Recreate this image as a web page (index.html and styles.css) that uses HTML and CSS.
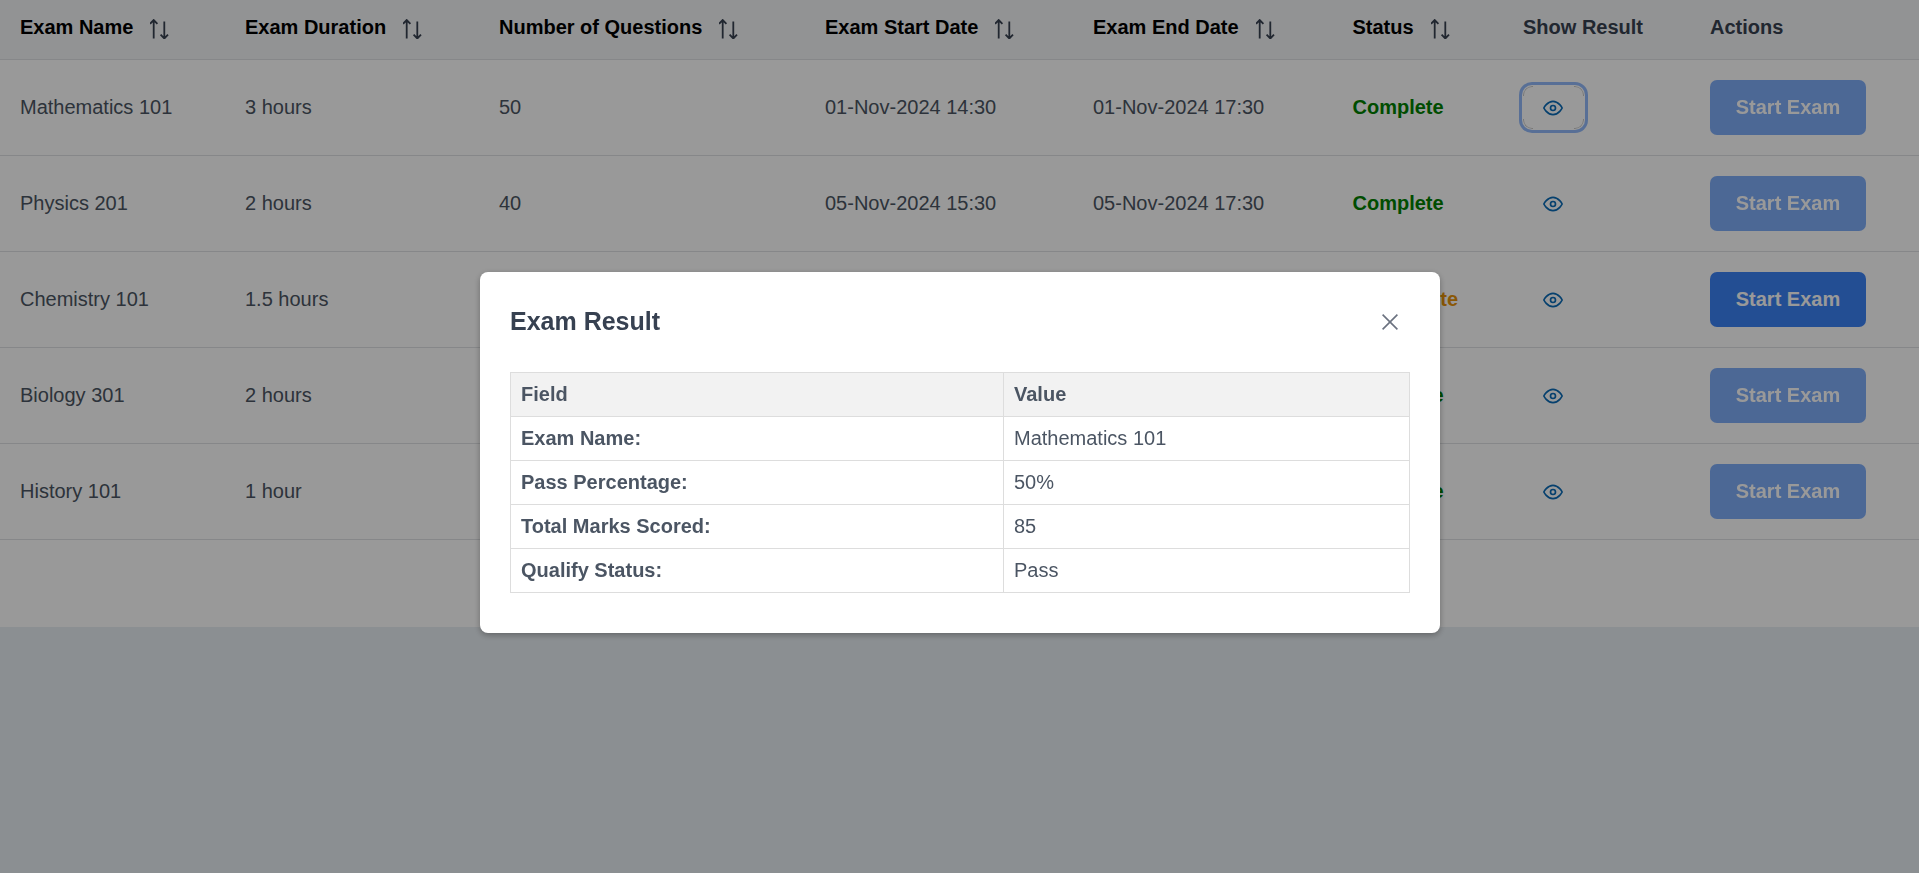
FILE: index.html
```html
<!DOCTYPE html>
<html lang="en">
<head>
<meta charset="utf-8">
<title>Exams</title>
<link rel="stylesheet" href="styles.css">
</head>
<body>
<svg class="defs" aria-hidden="true">
  <symbol id="sort" viewBox="0 0 20 20"><path d="M3.7 19.5V1M0 4.8 3.7 1l3.7 3.8M14.3 2.5v17M10.6 15.7l3.7 3.8 3.7-3.8"/></symbol>
  <symbol id="eye" viewBox="0 0 24 24"><path d="M1 12s4-8 11-8 11 8 11 8-4 8-11 8-11-8-11-8z"/><circle cx="12" cy="12" r="3"/></symbol>
</svg>
<main class="card">
  <table class="exams">
    <colgroup>
      <col class="c1"><col class="c2"><col class="c3"><col class="c4"><col class="c5"><col class="c6"><col class="c7"><col>
    </colgroup>
    <thead>
      <tr>
        <th class="sortable"><div class="th-in"><span>Exam Name</span><svg class="sort"><use href="#sort"/></svg></div></th>
        <th class="sortable"><div class="th-in"><span>Exam Duration</span><svg class="sort"><use href="#sort"/></svg></div></th>
        <th class="sortable"><div class="th-in"><span>Number of Questions</span><svg class="sort"><use href="#sort"/></svg></div></th>
        <th class="sortable"><div class="th-in"><span>Exam Start Date</span><svg class="sort"><use href="#sort"/></svg></div></th>
        <th class="sortable"><div class="th-in"><span>Exam End Date</span><svg class="sort"><use href="#sort"/></svg></div></th>
        <th class="sortable"><div class="th-in"><span>Status</span><svg class="sort"><use href="#sort"/></svg></div></th>
        <th>Show Result</th>
        <th>Actions</th>
      </tr>
    </thead>
    <tbody>
      <tr>
        <td>Mathematics 101</td><td>3 hours</td><td>50</td><td>01-Nov-2024 14:30</td><td>01-Nov-2024 17:30</td>
        <td class="done">Complete</td>
        <td class="ctl"><button class="view focused" type="button" aria-label="Show result"><svg class="eye"><use href="#eye"/></svg></button></td>
        <td class="ctl"><button class="start" type="button" disabled>Start Exam</button></td>
      </tr>
      <tr>
        <td>Physics 201</td><td>2 hours</td><td>40</td><td>05-Nov-2024 15:30</td><td>05-Nov-2024 17:30</td>
        <td class="done">Complete</td>
        <td class="ctl"><button class="view" type="button" aria-label="Show result"><svg class="eye"><use href="#eye"/></svg></button></td>
        <td class="ctl"><button class="start" type="button" disabled>Start Exam</button></td>
      </tr>
      <tr>
        <td>Chemistry 101</td><td>1.5 hours</td><td>30</td><td>10-Nov-2024 10:00</td><td>10-Nov-2024 11:30</td>
        <td class="open">Incomplete</td>
        <td class="ctl"><button class="view" type="button" aria-label="Show result"><svg class="eye"><use href="#eye"/></svg></button></td>
        <td class="ctl"><button class="start" type="button">Start Exam</button></td>
      </tr>
      <tr>
        <td>Biology 301</td><td>2 hours</td><td>45</td><td>15-Nov-2024 09:00</td><td>15-Nov-2024 11:00</td>
        <td class="done">Complete</td>
        <td class="ctl"><button class="view" type="button" aria-label="Show result"><svg class="eye"><use href="#eye"/></svg></button></td>
        <td class="ctl"><button class="start" type="button" disabled>Start Exam</button></td>
      </tr>
      <tr>
        <td>History 101</td><td>1 hour</td><td>25</td><td>20-Nov-2024 13:00</td><td>20-Nov-2024 14:00</td>
        <td class="done">Complete</td>
        <td class="ctl"><button class="view" type="button" aria-label="Show result"><svg class="eye"><use href="#eye"/></svg></button></td>
        <td class="ctl"><button class="start" type="button" disabled>Start Exam</button></td>
      </tr>
    </tbody>
  </table>
</main>
<div class="overlay">
  <section class="modal">
    <header class="modal-head">
      <h2>Exam Result</h2>
      <button class="close" type="button" aria-label="Close">
        <svg class="x" viewBox="0 0 16 16"><path d="M.6.6l14.8 14.8M15.4.6.6 15.4"/></svg>
      </button>
    </header>
    <table class="result">
      <colgroup><col class="field"><col></colgroup>
      <thead>
        <tr><th>Field</th><th>Value</th></tr>
      </thead>
      <tbody>
        <tr><th>Exam Name:</th><td>Mathematics 101</td></tr>
        <tr><th>Pass Percentage:</th><td>50%</td></tr>
        <tr><th>Total Marks Scored:</th><td>85</td></tr>
        <tr><th>Qualify Status:</th><td>Pass</td></tr>
      </tbody>
    </table>
  </section>
</div>
</body>
</html>
```

FILE: styles.css
```css
* { box-sizing: border-box; }
html, body { height: 100%; }
body {
  margin: 0;
  background: #e8eef3;
  font-family: "Liberation Sans", Arial, sans-serif;
  font-size: 20px;
  line-height: 30px;
  color: #4b5563;
  overflow: hidden;
}
.defs { display: none; }
.card { background: #fff; padding-bottom: 87px; }

.exams { width: 100%; table-layout: fixed; border-collapse: separate; border-spacing: 0; }
.c1 { width: 225px; }
.c2 { width: 254px; }
.c3 { width: 326px; }
.c4 { width: 268px; }
.c5 { width: 259.5px; }
.c6 { width: 170.5px; }
.c7 { width: 187px; }

.exams th {
  background: #f4f5f7;
  padding: 12px 20px 17px;
  text-align: left;
  font-weight: 700;
  color: #374151;
  border-bottom: 1px solid #e0e2e5;
  white-space: nowrap;
}
.exams th.sortable { color: #000; }
.th-in { display: flex; align-items: center; gap: 17px; }
.sort {
  width: 20px;
  height: 20px;
  margin-top: 3px;
  fill: none;
  stroke: #374151;
  stroke-width: 1.8;
  flex: none;
}
.exams td { padding: 19px 20px 21px; border-bottom: 1px solid #e0e2e5; white-space: nowrap; }
.exams td.ctl { padding: 20px; }
.done { color: #008000; font-weight: 700; }
.open { color: #e6930a; font-weight: 700; }

.view {
  position: relative;
  display: flex;
  align-items: center;
  justify-content: center;
  width: 63px;
  height: 45px;
  margin-left: -1px;
  padding: 0 1px 0 0;
  border: 0;
  background: none;
  border-radius: 10px;
}
.view.focused { box-shadow: 0 0 0 3px rgba(59, 130, 246, .55); }
.view.focused::before {
  content: "";
  position: absolute;
  inset: 1px;
  border: 1px solid rgba(0, 0, 0, .22);
  border-radius: 9px;
  -webkit-mask:
    linear-gradient(#000 0 0) 0 0 / 10px 10px no-repeat,
    linear-gradient(#000 0 0) 100% 0 / 10px 10px no-repeat,
    linear-gradient(#000 0 0) 0 100% / 10px 10px no-repeat,
    linear-gradient(#000 0 0) 100% 100% / 10px 10px no-repeat;
  mask:
    linear-gradient(#000 0 0) 0 0 / 10px 10px no-repeat,
    linear-gradient(#000 0 0) 100% 0 / 10px 10px no-repeat,
    linear-gradient(#000 0 0) 0 100% / 10px 10px no-repeat,
    linear-gradient(#000 0 0) 100% 100% / 10px 10px no-repeat;
}
.eye {
  width: 20px;
  height: 20px;
  fill: none;
  stroke: #0a6cb8;
  stroke-width: 2;
  stroke-linecap: round;
  stroke-linejoin: round;
}
.start {
  display: block;
  width: 156px;
  height: 55px;
  padding: 0 0 2px;
  border: 0;
  border-radius: 7px;
  background: #3b82f6;
  color: #fff;
  font: 700 20px/30px "Liberation Sans", Arial, sans-serif;
}
.start:disabled { opacity: .65; }

.overlay {
  position: fixed;
  inset: 0;
  background: rgba(0, 0, 0, .4);
  display: flex;
  justify-content: center;
  align-items: flex-start;
  padding: 272px 0 0 1px;
}
.modal {
  width: 960px;
  background: #fff;
  border-radius: 8px;
  padding: 31px 30px 40px;
  box-shadow: 0 2px 6px rgba(0, 0, 0, .3);
}
.modal-head { display: flex; justify-content: space-between; align-items: center; margin-bottom: 31.5px; }
.modal-head h2 { margin: 0; font-size: 25px; line-height: 37.5px; font-weight: 700; color: #374151; }
.close { padding: 0; border: 0; background: none; margin-right: 12px; display: flex; }
.x { width: 16px; height: 16px; fill: none; stroke: #6b7280; stroke-width: 1.6; }

.result { width: 100%; table-layout: fixed; border-collapse: collapse; }
.field { width: 493px; }
.result th, .result td {
  border: 1px solid #ddd;
  padding: 6px 10px 7px;
  text-align: left;
  color: #4b5563;
}
.result th { font-weight: 700; }
.result thead th { background: #f2f2f2; }
```
